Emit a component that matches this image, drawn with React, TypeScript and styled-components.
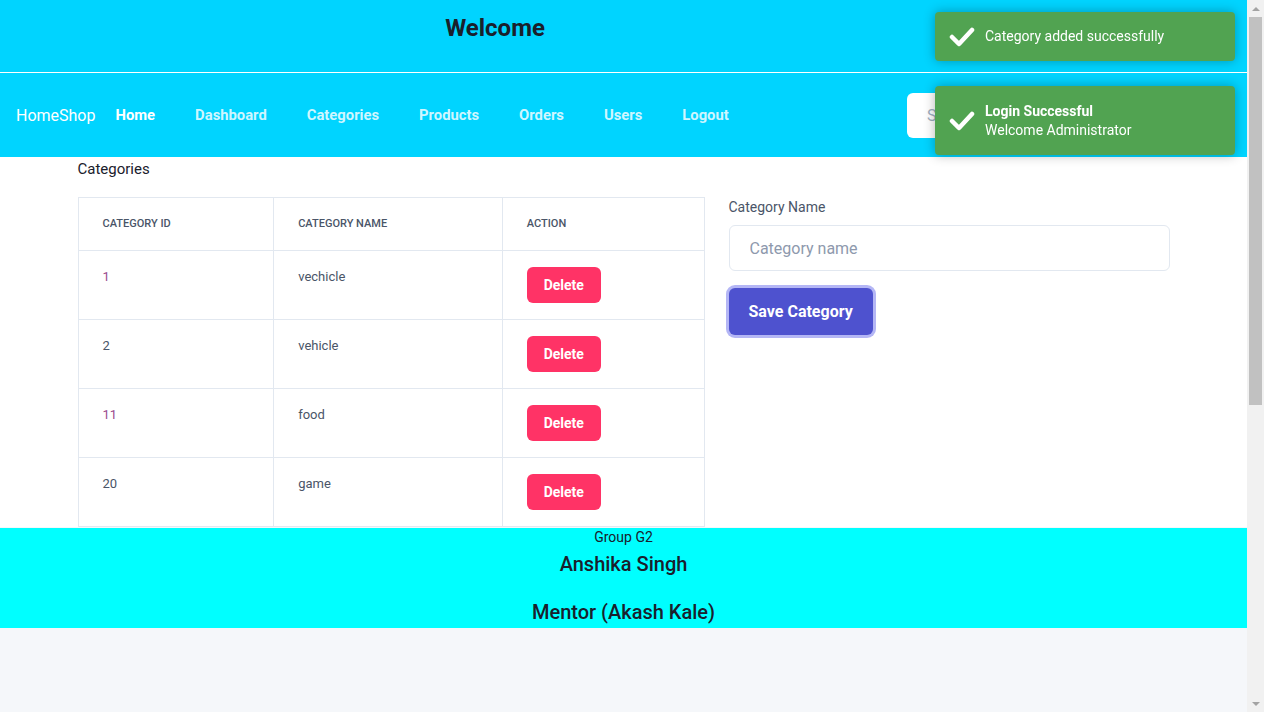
import React from "react";
import styled, { createGlobalStyle } from "styled-components";

const GlobalStyle = createGlobalStyle`
  html, body {
    margin: 0;
    padding: 0;
    background: #f5f7fa;
    font-family: Roboto, "Liberation Sans", Arial, sans-serif;
    overflow: hidden;
  }
  * { box-sizing: border-box; }
`;

const Shell = styled.div`
  display: flex;
  height: 712px;
  overflow: hidden;
`;

const Page = styled.div`
  flex: 1;
  min-width: 0;
  display: flex;
  flex-direction: column;
  overflow: hidden;
  background: #f5f7fa;
`;

const ScrollTrack = styled.div`
  width: 17px;
  flex-shrink: 0;
  background: #f1f1f1;
  display: flex;
  flex-direction: column;
  align-items: center;
`;

const ScrollArrow = styled.div<{ $down?: boolean }>`
  height: 17px;
  width: 17px;
  display: flex;
  align-items: center;
  justify-content: center;
  margin-top: ${(p) => (p.$down ? "auto" : "0")};
  &::after {
    content: "";
    width: 0;
    height: 0;
    border-left: 4px solid transparent;
    border-right: 4px solid transparent;
    ${(p) =>
      p.$down
        ? "border-top: 4px solid #a3a3a3;"
        : "border-bottom: 4px solid #a3a3a3;"}
  }
`;

const ScrollThumb = styled.div`
  width: 13px;
  height: 388px;
  background: #c1c1c1;
`;

const TopHeader = styled.header`
  background: #00d4ff;
  height: 73px;
  padding: 14px 257px 0 0;
  text-align: center;
  border-bottom: 1px solid #ffffff;
`;

const WelcomeTitle = styled.h1`
  margin: 0;
  font-size: 24px;
  line-height: 28px;
  font-weight: 700;
  color: #1a202c;
`;

const NavBar = styled.nav`
  background: #00d4ff;
  height: 84px;
  display: flex;
  align-items: center;
  padding: 0 16px;
`;

const Brand = styled.span`
  font-size: 16px;
  color: #ffffff;
  margin-right: 20px;
`;

const NavList = styled.div`
  display: flex;
  align-items: center;
  gap: 40px;
`;

const NavLink = styled.a<{ $active?: boolean }>`
  font-size: 14.8px;
  font-weight: 700;
  color: ${(p) => (p.$active ? "#ffffff" : "rgba(255,255,255,0.82)")};
  text-decoration: none;
`;

const SearchBox = styled.input`
  margin-left: auto;
  width: 324px;
  height: 45px;
  border: none;
  border-radius: 6px;
  padding: 0 20px;
  font-size: 16px;
  font-family: inherit;
  background: #ffffff;
  &::placeholder { color: #a0aec0; }
`;

const Main = styled.main`
  background: #ffffff;
  padding-top: 1px;
`;

const Container = styled.div`
  width: 1092px;
  margin: 0 auto;
`;

const SectionTitle = styled.div`
  font-size: 15px;
  line-height: 22px;
  color: #1a202c;
`;

const Columns = styled.div`
  display: flex;
  gap: 24px;
  margin-top: 17px;
  align-items: flex-start;
`;

const Table = styled.table`
  width: 627px;
  border-collapse: collapse;
  flex-shrink: 0;
`;

const HeadCell = styled.th<{ $w: number }>`
  width: ${(p) => p.$w}px;
  text-align: left;
  font-size: 11px;
  line-height: 12px;
  font-weight: 500;
  color: #4a5568;
  text-transform: uppercase;
  padding: 20px 24px;
  border: 1px solid #e2e8f0;
`;

const Cell = styled.td<{ $accent?: boolean }>`
  vertical-align: top;
  font-size: 13px;
  line-height: 20px;
  color: ${(p) => (p.$accent ? "#9a4a8e" : "#4a5568")};
  padding: 16px 24px 16px;
  border: 1px solid #e2e8f0;
  height: 69px;
`;

const DeleteButton = styled.button`
  width: 74px;
  height: 36px;
  border: none;
  border-radius: 6px;
  background: #ff3366;
  color: #ffffff;
  font-family: inherit;
  font-size: 14px;
  font-weight: 700;
`;

const Form = styled.div`
  flex: 1;
  display: flex;
  flex-direction: column;
  align-items: flex-start;
`;

const Label = styled.label`
  font-size: 14px;
  line-height: 20px;
  color: #4a5568;
`;

const TextInput = styled.input`
  margin-top: 8px;
  width: 441px;
  height: 46px;
  border: 1px solid #e2e8f0;
  border-radius: 6px;
  padding: 0 20px;
  font-family: inherit;
  font-size: 16px;
  color: #1a202c;
  &::placeholder { color: #8e99ad; }
`;

const SaveButton = styled.button`
  margin-top: 17px;
  height: 47px;
  padding: 0 20px;
  border: none;
  border-radius: 6px;
  background: #4e52cf;
  color: #ffffff;
  font-family: inherit;
  font-size: 16px;
  font-weight: 700;
  box-shadow: 0 0 0 3px #b4b6f5;
`;

const Footer = styled.footer`
  background: #00ffff;
  height: 100px;
  flex-shrink: 0;
  text-align: center;
  color: #1a202c;
  margin-top: 1px;
`;

const GroupLabel = styled.div`
  font-size: 14px;
  line-height: 18px;
`;

const FooterName = styled.div<{ $gap: number }>`
  font-size: 20px;
  line-height: 24px;
  font-weight: 500;
  margin-top: ${(p) => p.$gap}px;
`;

const ToastStack = styled.div`
  position: fixed;
  top: 12px;
  right: 29px;
  display: flex;
  flex-direction: column;
  gap: 25px;
  z-index: 10;
`;

const Toast = styled.div`
  width: 300px;
  background: #51a351;
  border-radius: 4px;
  padding: 15px 15px 15px 50px;
  color: #ffffff;
  font-size: 14px;
  line-height: 19px;
  box-shadow: 0 0 12px rgba(0,0,0,0.3);
  position: relative;
`;

const ToastIcon = styled.svg`
  position: absolute;
  left: 14px;
  top: 50%;
  margin-top: -11px;
`;

const ToastTitle = styled.div`
  font-weight: 700;
  line-height: 20px;
`;

const Check = () => (
  <ToastIcon width="26" height="22" viewBox="0 0 26 22">
    <polyline points="3,11 10,18 23,4" fill="none" stroke="#fff" strokeWidth="4.5" strokeLinecap="round" strokeLinejoin="round" />
  </ToastIcon>
);

const rows = [
  { id: "1", name: "vechicle", accent: true },
  { id: "2", name: "vehicle", accent: false },
  { id: "11", name: "food", accent: true },
  { id: "20", name: "game", accent: false },
];

export default function App() {
  return (
    <>
      <GlobalStyle />
      <Shell>
        <Page>
          <TopHeader>
            <WelcomeTitle>Welcome</WelcomeTitle>
          </TopHeader>
          <NavBar>
            <Brand>HomeShop</Brand>
            <NavList>
              <NavLink $active>Home</NavLink>
              <NavLink>Dashboard</NavLink>
              <NavLink>Categories</NavLink>
              <NavLink>Products</NavLink>
              <NavLink>Orders</NavLink>
              <NavLink>Users</NavLink>
              <NavLink>Logout</NavLink>
            </NavList>
            <SearchBox placeholder="Search" />
          </NavBar>
          <Main>
            <Container>
              <SectionTitle>Categories</SectionTitle>
              <Columns>
                <Table>
                  <thead>
                    <tr>
                      <HeadCell $w={196}>Category ID</HeadCell>
                      <HeadCell $w={229}>Category Name</HeadCell>
                      <HeadCell $w={202}>Action</HeadCell>
                    </tr>
                  </thead>
                  <tbody>
                    {rows.map((r) => (
                      <tr key={r.id}>
                        <Cell $accent={r.accent}>{r.id}</Cell>
                        <Cell>{r.name}</Cell>
                        <Cell>
                          <DeleteButton>Delete</DeleteButton>
                        </Cell>
                      </tr>
                    ))}
                  </tbody>
                </Table>
                <Form>
                  <Label>Category Name</Label>
                  <TextInput placeholder="Category name" />
                  <SaveButton>Save Category</SaveButton>
                </Form>
              </Columns>
            </Container>
          </Main>
          <Footer>
            <GroupLabel>Group G2</GroupLabel>
            <FooterName $gap={6}>Anshika Singh</FooterName>
            <FooterName $gap={24}>Mentor (Akash Kale)</FooterName>
          </Footer>
        </Page>
        <ScrollTrack>
          <ScrollArrow />
          <ScrollThumb />
          <ScrollArrow $down />
        </ScrollTrack>
      </Shell>
      <ToastStack>
        <Toast>
          <Check />
          Category added successfully
        </Toast>
        <Toast>
          <Check />
          <ToastTitle>Login Successful</ToastTitle>
          Welcome Administrator
        </Toast>
      </ToastStack>
    </>
  );
}
